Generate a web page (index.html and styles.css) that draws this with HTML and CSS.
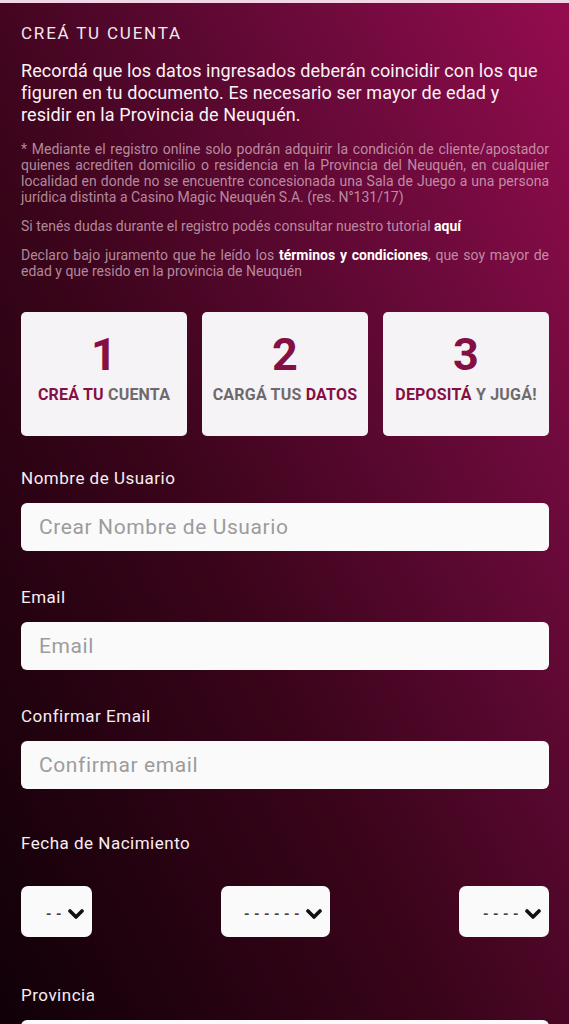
FILE: index.html
```html
<!DOCTYPE html>
<html lang="es">
<head>
<meta charset="utf-8">
<title>Creá tu cuenta</title>
<link rel="stylesheet" href="styles.css">
</head>
<body>
<div class="page">
  <h1 class="title">CREÁ TU CUENTA</h1>
  <p class="lead">Recordá que los datos ingresados deberán coincidir con los que figuren en tu documento. Es necesario ser mayor de edad y residir en la Provincia de Neuquén.</p>
  <p class="note">* Mediante el registro online solo podrán adquirir la condición de cliente/apostador quienes acrediten domicilio o residencia en la Provincia del Neuquén, en cualquier localidad en donde no se encuentre concesionada una Sala de Juego a una persona jurídica distinta a Casino Magic Neuquén S.A. (res. N°131/17)</p>
  <p class="note">Si tenés dudas durante el registro podés consultar nuestro tutorial <b>aquí</b></p>
  <p class="note">Declaro bajo juramento que he leído los <b>términos y condiciones</b>, que soy mayor de edad y que resido en la provincia de Neuquén</p>

  <div class="steps">
    <div class="step">
      <div class="num">1</div>
      <div class="step-label"><span class="hl">CREÁ TU</span> CUENTA</div>
    </div>
    <div class="step">
      <div class="num">2</div>
      <div class="step-label">CARGÁ TUS <span class="hl">DATOS</span></div>
    </div>
    <div class="step">
      <div class="num">3</div>
      <div class="step-label"><span class="hl">DEPOSITÁ</span> Y JUGÁ!</div>
    </div>
  </div>

  <div class="field">
    <label class="label">Nombre de Usuario</label>
    <input class="input" type="text" placeholder="Crear Nombre de Usuario">
  </div>
  <div class="field">
    <label class="label">Email</label>
    <input class="input" type="text" placeholder="Email">
  </div>
  <div class="field">
    <label class="label">Confirmar Email</label>
    <input class="input" type="text" placeholder="Confirmar email">
  </div>
  <div class="field field-date">
    <label class="label">Fecha de Nacimiento</label>
    <div class="dates">
      <div class="sel sel-day"><span class="dash">- -</span><svg class="chev" viewBox="0 0 16 12" width="16" height="12"><polyline points="2,3 8,9 14,3" fill="none" stroke="#111" stroke-width="3.6" stroke-linecap="round" stroke-linejoin="round"/></svg></div>
      <div class="sel sel-month"><span class="dash">- - - - - -</span><svg class="chev" viewBox="0 0 16 12" width="16" height="12"><polyline points="2,3 8,9 14,3" fill="none" stroke="#111" stroke-width="3.6" stroke-linecap="round" stroke-linejoin="round"/></svg></div>
      <div class="sel sel-year"><span class="dash">- - - -</span><svg class="chev" viewBox="0 0 16 12" width="16" height="12"><polyline points="2,3 8,9 14,3" fill="none" stroke="#111" stroke-width="3.6" stroke-linecap="round" stroke-linejoin="round"/></svg></div>
    </div>
  </div>
  <div class="field field-prov">
    <label class="label">Provincia</label>
    <input class="input" type="text">
  </div>
</div>
</body>
</html>
```

FILE: styles.css
```css
html, body {
  margin: 0;
  padding: 0;
}
body {
  font-family: Roboto, "Noto Sans", Arial, sans-serif;
  background: #120009;
  color: #fff;
}
.page {
  width: 569px;
  min-height: 1024px;
  box-sizing: border-box;
  border-top: 3px solid #f3d6e6;
  padding: 19px 20px 40px 21px;
  background: linear-gradient(to top right, #0c0006 0%, #380419 42%, #6a0a3a 75%, #940c4f 100%);
}
.title {
  margin: 0;
  font-size: 17px;
  font-weight: 400;
  letter-spacing: 1.8px;
  line-height: 22px;
  color: #f4e6ee;
}
.lead {
  margin: 16px 0 0;
  max-width: 522px;
  font-size: 18px;
  line-height: 22px;
  letter-spacing: 0.1px;
  color: #fbf3f7;
}
.note {
  margin: 13px 0 0;
  font-size: 14px;
  line-height: 16px;
  text-align: justify;
  color: rgba(226, 196, 212, 0.7);
}
.lead + .note {
  margin-top: 15px;
}
.note b {
  color: #fff;
  font-weight: 700;
}
.steps {
  margin-top: 33px;
  display: grid;
  grid-template-columns: repeat(3, 1fr);
  column-gap: 15px;
}
.step {
  height: 124px;
  background: #f5f3f5;
  border-radius: 5px;
  display: flex;
  flex-direction: column;
  align-items: center;
}
.num {
  margin-top: 20px;
  font-size: 45px;
  line-height: 46px;
  font-weight: 700;
  color: #850f43;
}
.step-label {
  margin-top: 8px;
  font-size: 16px;
  line-height: 18px;
  font-weight: 700;
  color: #6e6a6c;
  letter-spacing: 0.2px;
  white-space: nowrap;
}
.step-label .hl {
  color: #850f43;
}
.field {
  display: flex;
  flex-direction: column;
}
.steps + .field {
  margin-top: 32px;
}
.field + .field {
  margin-top: 36px;
}
.label {
  font-size: 17px;
  line-height: 20px;
  letter-spacing: 0.5px;
  color: #f8eef3;
}
.input {
  margin-top: 15px;
  height: 48px;
  box-sizing: border-box;
  border: none;
  border-radius: 6px;
  background: #fafafa;
  padding: 0 18px;
  font-family: Roboto, "Noto Sans", Arial, sans-serif;
  font-size: 21px;
  letter-spacing: 0.6px;
  color: #333;
  outline: none;
}
.input::placeholder {
  color: #9c9c9c;
}
.field-date {
  margin-top: 44px !important;
}
.dates {
  margin-top: 33px;
  display: flex;
  justify-content: space-between;
}
.sel {
  height: 51px;
  box-sizing: border-box;
  background: #fafafa;
  border-radius: 7px;
  display: flex;
  align-items: center;
  justify-content: flex-end;
  padding: 4px 8px 0 0;
  gap: 6px;
}
.sel-day { width: 71px; }
.sel-month { width: 109px; }
.sel-year { width: 90px; }
.dash {
  font-size: 14px;
  font-weight: 700;
  color: #444;
  letter-spacing: 0.5px;
}
.chev {
  display: block;
}
.field-prov {
  margin-top: 48px !important;
}
```
